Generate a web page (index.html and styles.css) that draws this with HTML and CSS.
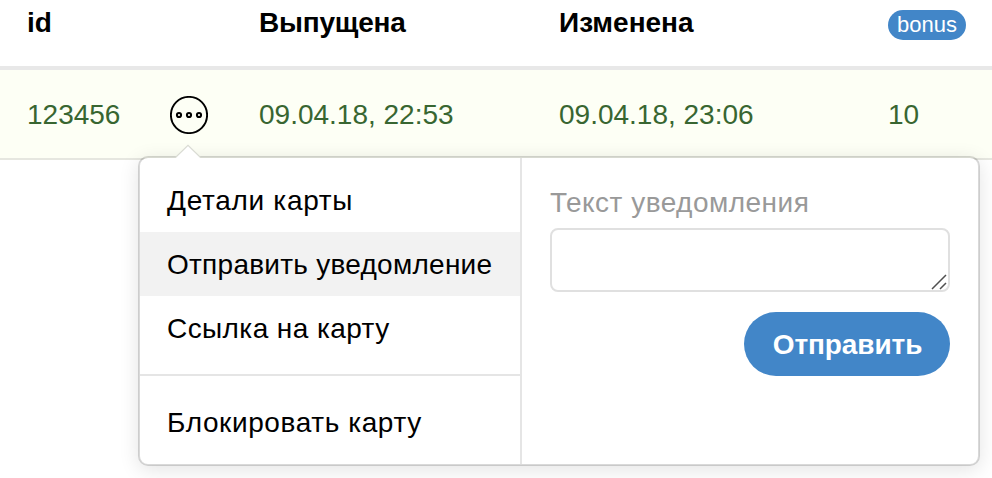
FILE: index.html
```html
<!DOCTYPE html>
<html lang="ru">
<head>
<meta charset="utf-8">
<title>Карты</title>
<link rel="stylesheet" href="styles.css">
</head>
<body>
<div class="table">
  <div class="row head">
    <span class="cell">id</span>
    <span class="cell"></span>
    <span class="cell issued">Выпущена</span>
    <span class="cell changed">Изменена</span>
    <span class="cell"><span class="tag">bonus</span></span>
  </div>
  <div class="row record">
    <span class="cell">123456</span>
    <div class="cell actions">
      <svg class="more" width="38" height="38" viewBox="0 0 38 38" fill="none" stroke="#000">
        <circle cx="19" cy="19" r="18.1" stroke-width="1.9"/>
        <g stroke-width="2"><circle cx="9" cy="19" r="2.1"/><circle cx="19" cy="19" r="2.1"/><circle cx="29" cy="19" r="2.1"/></g>
      </svg>
      <div class="popup">
        <svg class="arrow" width="28" height="14" viewBox="0 0 28 14">
          <path d="M1 14 14 1.5 27 14Z" fill="#fff"/>
          <path d="M1 14 14 1.3 27 14" fill="none" stroke="#d9dbd3" stroke-width="1.2"/>
        </svg>
        <div class="menu">
          <a class="item details">Детали карты</a>
          <a class="item notify active">Отправить уведомление</a>
          <a class="item link">Ссылка на карту</a>
          <hr class="separator">
          <a class="item block">Блокировать карту</a>
        </div>
        <form class="form">
          <label class="label" for="message">Текст уведомления</label>
          <div class="field">
            <textarea id="message" class="input"></textarea>
            <svg class="grip" width="16" height="16" viewBox="0 0 16 16" fill="none" stroke="#505050" stroke-width="1.5"><path d="M1 15 15 1M9 15l6-6"/></svg>
          </div>
          <button class="submit" type="button">Отправить</button>
        </form>
      </div>
    </div>
    <span class="cell">09.04.18, 22:53</span>
    <span class="cell">09.04.18, 23:06</span>
    <span class="cell">10</span>
  </div>
</div>
</body>
</html>
```

FILE: styles.css
```css
* {
  box-sizing: border-box;
}

body {
  min-height: 100vh;
  margin: 0;
  background: #fff;
  color: #000;
  font: 28px/32px "Liberation Sans", Arial, sans-serif;
}

.row {
  display: grid;
  grid-template-columns: 143px 89px 300px 329px 1fr;
  padding-left: 27px;
}

.head {
  height: 70px;
  padding-top: 7px;
  border-bottom: 4px solid #e8e8e8;
  font-weight: 700;
}

.issued {
  letter-spacing: -.2px;
}

.tag {
  display: block;
  width: 78px;
  height: 30px;
  margin-top: 3px;
  border-radius: 15px;
  background: #4286c8;
  color: #fff;
  font-size: 22px;
  font-weight: 400;
  line-height: 29px;
  text-align: center;
}

.record {
  height: 90px;
  padding-top: 2px;
  align-items: center;
  border-bottom: 2px solid #e6e7e0;
  background: #fdfff5;
  color: #386631;
}

.actions {
  position: relative;
  height: 38px;
}

.more {
  display: block;
}

.popup {
  position: absolute;
  top: 60px;
  left: -32px;
  display: grid;
  grid-template-columns: 382px 1fr;
  width: 842px;
  height: 310px;
  border: 2px solid rgba(0, 0, 0, .15);
  border-radius: 10px;
  background: #fff;
  background-clip: padding-box;
  box-shadow: 0 4px 20px rgba(0, 0, 0, .11);
  color: #000;
}

.arrow {
  position: absolute;
  top: -14px;
  left: 34px;
}

.menu {
  padding-top: 10px;
  border-right: 2px solid #e5e5e5;
}

.item {
  display: block;
  height: 64px;
  padding: 17px 0 15px 27px;
  white-space: nowrap;
}

.details {
  letter-spacing: .7px;
}

.notify {
  letter-spacing: .26px;
}

.link {
  letter-spacing: .42px;
}

.block {
  letter-spacing: .6px;
}

.active {
  background: #f2f2f2;
}

.separator {
  height: 2px;
  margin: 14px 0;
  border: 0;
  background: #e5e5e5;
}

.form {
  display: flex;
  flex-direction: column;
  padding: 29px 28px 0;
}

.label {
  color: #999;
  letter-spacing: .48px;
}

.field {
  position: relative;
  height: 64px;
  margin: 9px 0 20px;
}

.input {
  display: block;
  width: 100%;
  height: 100%;
  padding: 8px;
  border: 2px solid #e0e0e0;
  border-radius: 8px;
  background: #fff;
  font: inherit;
  resize: none;
}

.grip {
  position: absolute;
  right: 3px;
  bottom: 2px;
}

.submit {
  align-self: flex-end;
  width: 206px;
  height: 64px;
  padding: 2px 0 0 1px;
  border: 0;
  border-radius: 32px;
  background: #4286c8;
  color: #fff;
  font: 700 28px/62px "Liberation Sans", Arial, sans-serif;
  letter-spacing: -.1px;
}
```
